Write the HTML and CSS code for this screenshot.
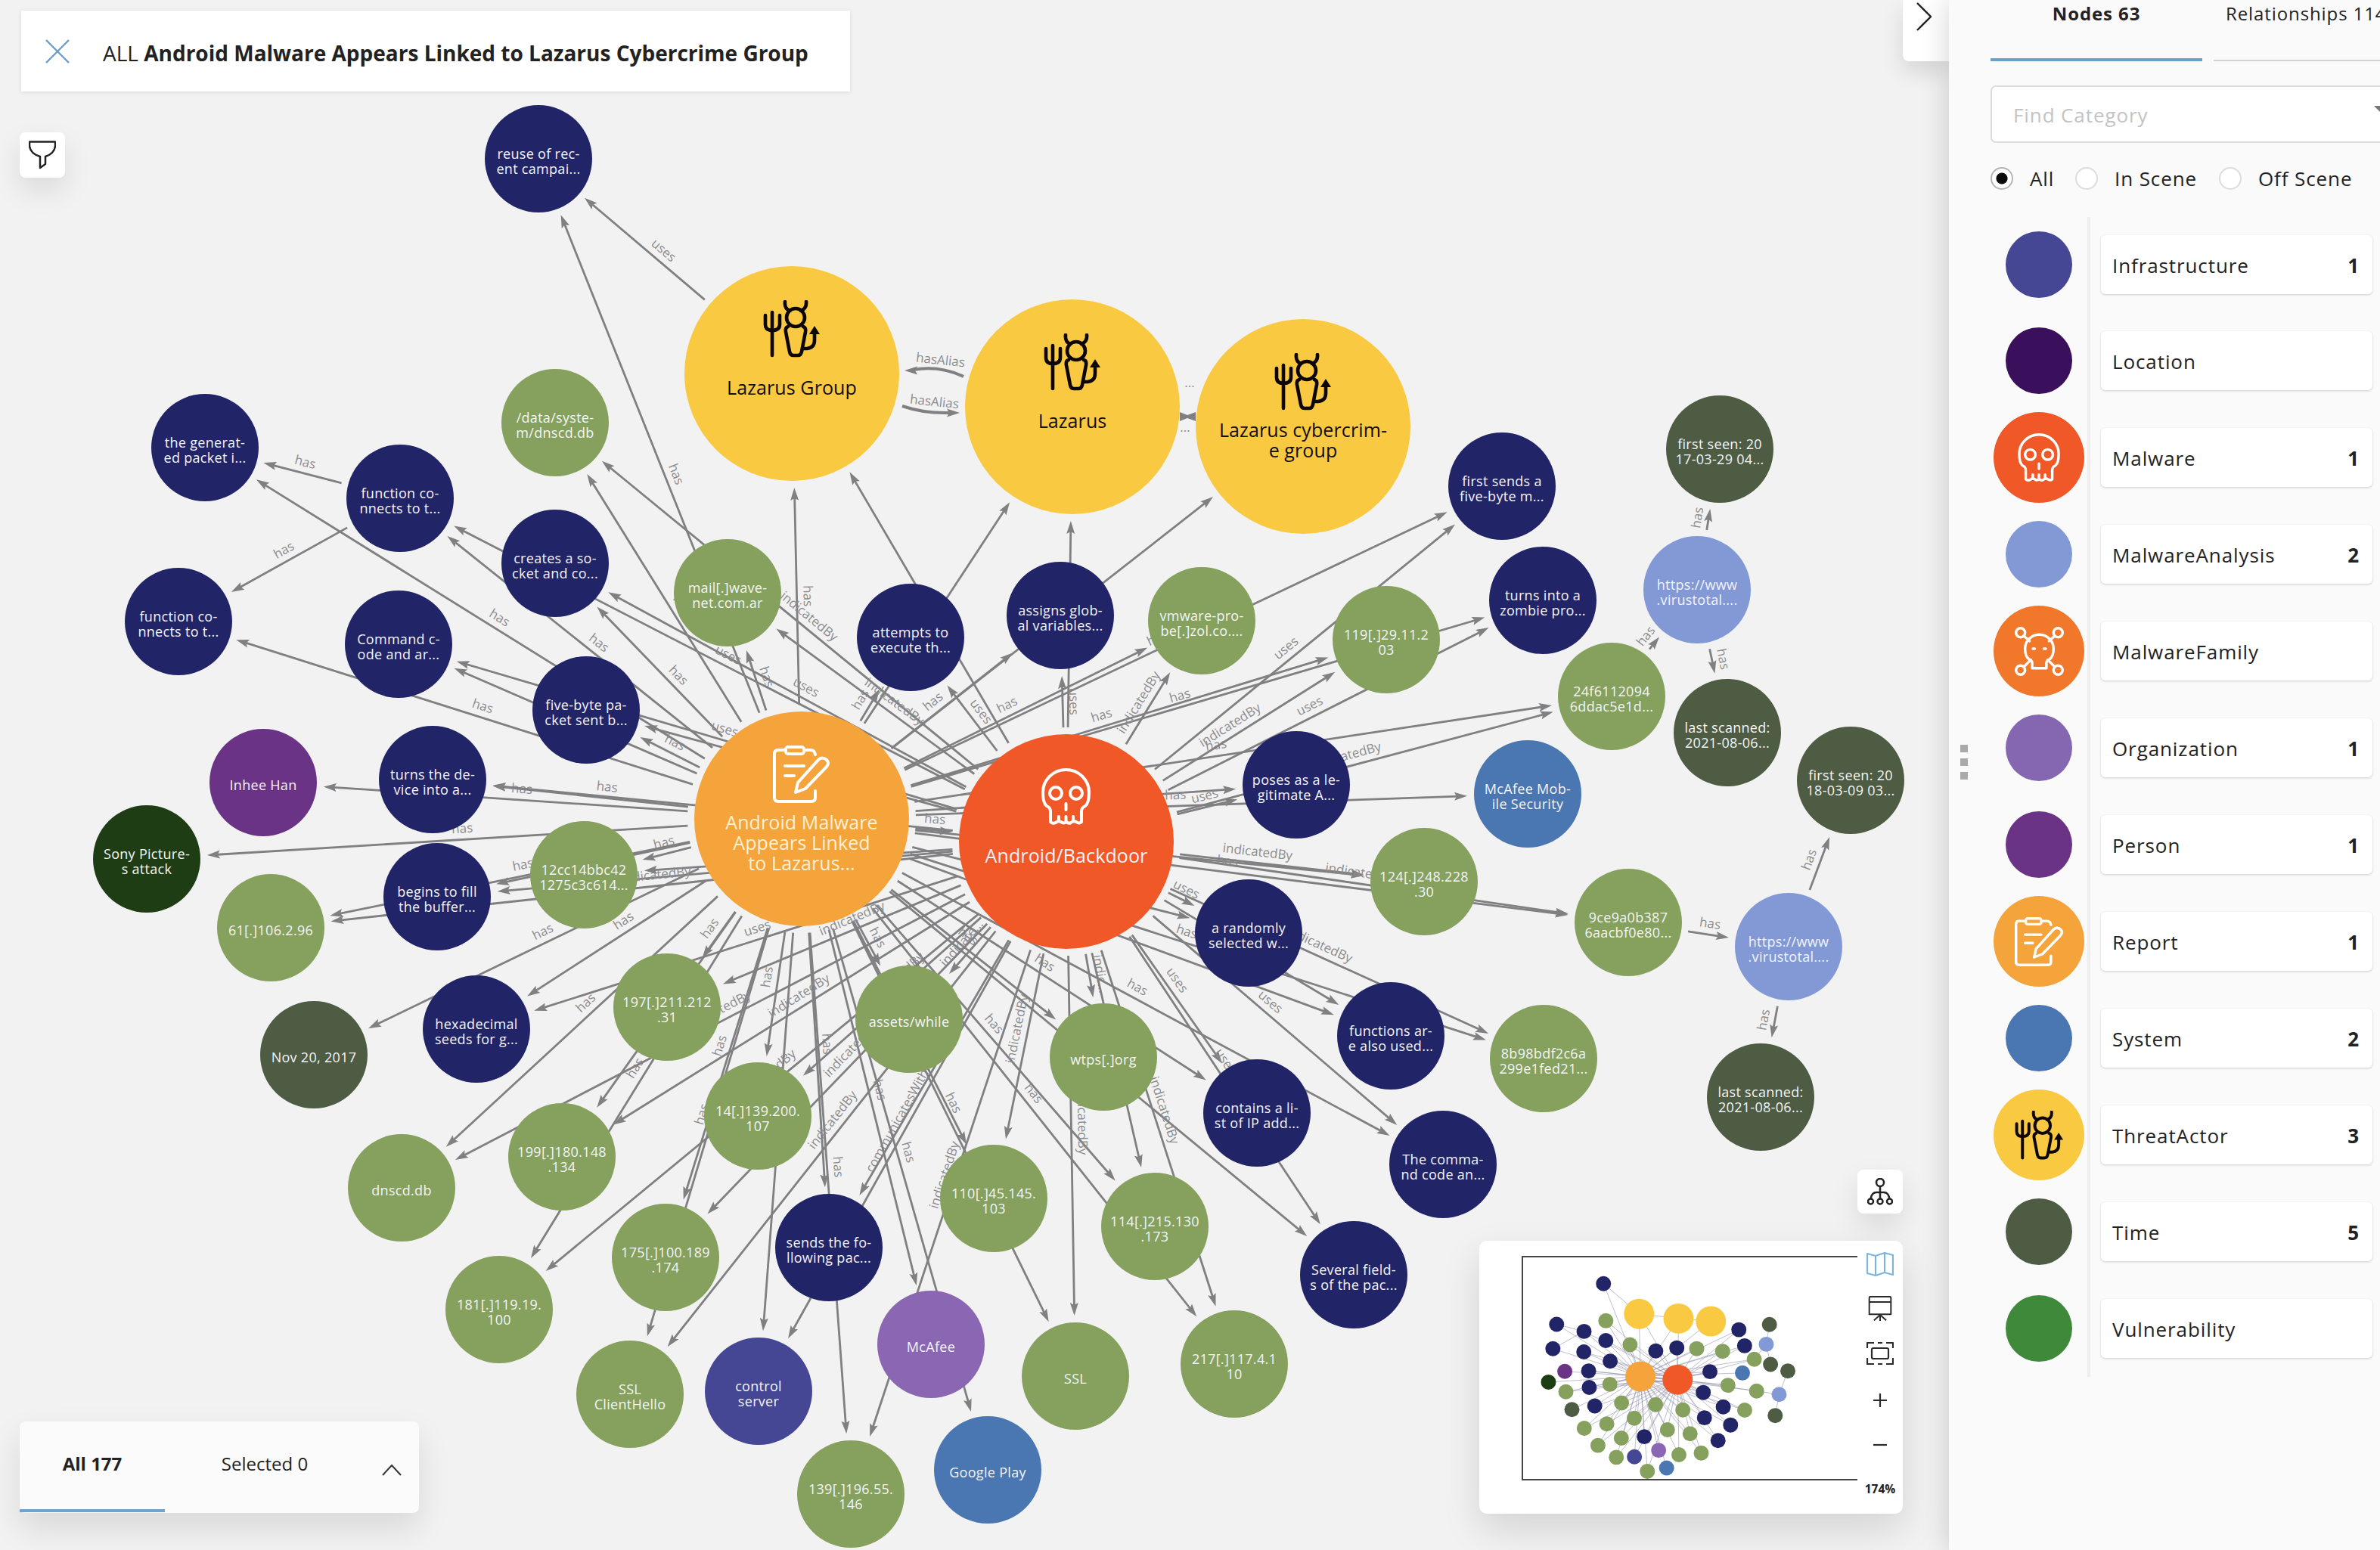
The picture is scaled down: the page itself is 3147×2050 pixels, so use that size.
FILE: index.html
```html
<!DOCTYPE html>
<html lang="en">
<head>
  <meta charset="UTF-8">
  <meta name="viewport" content="width=device-width, initial-scale=1.0">
  <title>Android Malware Appears Linked to Lazarus Cybercrime Group</title>
  <link rel="stylesheet" href="styles.css">
</head>
<body>
  <!-- Shared icons -->
  <svg class="defs" width="0" height="0">
    <symbol id="icon-devil" viewBox="0 0 76 76">
      <g fill="none" stroke="currentColor" stroke-width="4.6" stroke-linecap="round" stroke-linejoin="round">
        <path d="M12 16V73M3 20V32Q3 40 12 40Q22 40 22 32V20"/>
        <path d="M29 2Q28 11 35 14M57 2Q58 11 50 14"/>
        <circle cx="43" cy="23" r="12"/>
        <path d="M33 35Q29 36 30 42L35 68Q36 73 40 73H46Q50 73 51 68L56 42Q57 36 53 35"/>
        <path d="M53 64H58Q68 63 68 53V42"/>
      </g>
      <path d="M68 34L75 45H61Z" fill="currentColor"/>
    </symbol>
    <symbol id="icon-skull" viewBox="0 0 76 76">
      <g fill="none" stroke="currentColor" stroke-width="4" stroke-linecap="round" stroke-linejoin="round">
        <path d="M17 71V57Q17 52 12 50Q7 46 7 32A30.500 30 0 0 1 68 32Q68 46 63 50Q58 52 58 57V71Q55 74 51 71Q48 69 44 72Q41 74 38 71Q34 74 31 71Q27 69 24 72Q20 74 17 71Z"/>
        <circle cx="24" cy="33" r="8"/>
        <circle cx="51" cy="33" r="8"/>
        <path d="M37.500 47V55M28 64V70M37.500 64V70M47 64V70"/>
      </g>
    </symbol>
    <symbol id="icon-report" viewBox="0 0 76 76">
      <g fill="none" stroke="currentColor" stroke-width="4" stroke-linecap="round" stroke-linejoin="round">
        <path d="M17 6H7Q2 6 2 11V69Q2 74 7 74H51Q56 74 56 69V60M41 6H50Q55 6 56 12"/>
        <rect x="17" y="2" width="24" height="9" rx="3"/>
        <path d="M16 27H41M16 40H28"/>
        <path d="M30 62L33 49L60 19Q65 14 71 19Q75 23 71 28L43 57Z"/>
      </g>
    </symbol>
    <symbol id="icon-family" viewBox="0 0 76 76">
      <g fill="none" stroke="currentColor" stroke-width="4" stroke-linecap="round" stroke-linejoin="round">
        <circle cx="9" cy="9" r="7"/><circle cx="67" cy="9" r="7"/>
        <circle cx="9" cy="67" r="7"/><circle cx="67" cy="67" r="7"/>
        <path d="M14 14L23 22M62 14L53 22M14 62L25 51M62 62L51 51"/>
        <path d="M27 64V56Q27 52 22 50Q16 46 16 34A22 22 0 0 1 60 34Q60 46 54 50Q49 52 49 56V64Z"/>
        <path d="M28 34H31M45 34H48"/>
      </g>
    </symbol>
  </svg>

  <div class="app">
    <main class="canvas">
      <svg id="graph" class="graph" viewBox="0 0 2577 2050"></svg>

      <header class="title-card">
        <svg class="close-icon" viewBox="0 0 32 32"><path d="M1 1L31 31M31 1L1 31"/></svg>
        <div>ALL <b>Android Malware Appears Linked to Lazarus Cybercrime Group</b></div>
      </header>

      <button class="tool-btn filter-btn">
        <svg viewBox="0 0 36 38"><path d="M1 1.500H35V7Q34 17 22 21V31L15 36V21Q2 17 1 7Z"/></svg>
      </button>

      <button class="collapse-btn">
        <svg viewBox="0 0 20 38"><path d="M1 1L19 19L1 37"/></svg>
      </button>

      <div class="selection-bar">
        <div class="sel-tab active">All 177</div>
        <div class="sel-tab">Selected 0</div>
        <svg class="caret" viewBox="0 0 26 15"><path d="M1 14L13 1L25 14"/></svg>
      </div>

      <button class="tool-btn layout-btn">
        <svg viewBox="0 0 34 36">
          <circle cx="17" cy="6" r="5"/><circle cx="4.500" cy="31" r="3.500"/><circle cx="17" cy="31" r="3.500"/><circle cx="29.500" cy="31" r="3.500"/>
          <path d="M17 11V27.500M4.500 27.500Q6 19 12 19H22Q28 19 29.500 27.500"/>
        </svg>
      </button>

      <section class="map-panel">
        <div class="map-view"><svg id="minimap" viewBox="0 0 444 296"></svg></div>
        <div class="map-tools">
          <svg class="blue" viewBox="0 0 36 32"><path d="M1 2L12 5L24 1L35 4V30L24 27L12 31L1 28ZM12 5V31M24 1V27"/></svg>
          <svg viewBox="0 0 36 38"><path d="M2 3Q2 1 4 1H32Q34 1 34 3V27H2ZM2 9H34M18 27V37M18 28L9 36M18 28L27 36"/></svg>
          <svg viewBox="0 0 36 30"><path d="M1 8V1H10M15 1H21M26 1H35V8M35 21V29H26M21 29H15M10 29H1V21M7 10Q7 8 9 8H27Q29 8 29 10V20Q29 22 27 22H9Q7 22 7 20Z"/></svg>
          <svg class="small" viewBox="0 0 18 18"><path d="M0 9H18M9 0V18"/></svg>
          <svg class="small" viewBox="0 0 18 18"><path d="M0 9H18"/></svg>
          <b>174%</b>
        </div>
      </section>
    </main>

    <aside class="sidebar">
      <div class="drag"><i></i><i></i><i></i></div>
      <nav class="tabs">
        <div class="tab active">Nodes 63</div>
        <div class="tab">Relationships 114</div>
      </nav>
      <div class="search"><span>Find Category</span><i class="arrow"></i></div>
      <div class="radios">
        <label class="all"><i class="radio on"></i>All</label>
        <label class="in"><i class="radio"></i>In Scene</label>
        <label><i class="radio"></i>Off Scene</label>
      </div>
      <div class="categories" id="categories"></div>
    </aside>
  </div>

  <script>
    const colors = {
      navy: '#222468', green: '#85a15d', yellow: '#f9c942', orange: '#f4a43a', red: '#f05828',
      person: '#6a3386', event: '#1f3d14', time: '#4d5c42', analysis: '#8299d5', org: '#8b66b2',
      infra: '#454795', system: '#4a76b2'
    };

    // id, x, y, type, label lines
    const nodes = [
      ['reuse', 712, 210, 'navy', 'reuse of rec-|ent campai...'],
      ['lg', 1047, 494, 'yellow', 'Lazarus Group'],
      ['lz', 1418, 538, 'yellow', 'Lazarus'],
      ['lc', 1723, 564, 'yellow', 'Lazarus cybercrim-|e group'],
      ['gen', 271, 592, 'navy', 'the generat-|ed packet i...'],
      ['fc1', 529, 659, 'navy', 'function co-|nnects to t...'],
      ['data', 734, 559, 'green', '/data/syste-|m/dnscd.db'],
      ['creates', 734, 745, 'navy', 'creates a so-|cket and co...'],
      ['fc2', 236, 822, 'navy', 'function co-|nnects to t...'],
      ['cmd', 527, 852, 'navy', 'Command c-|ode and ar...'],
      ['five', 775, 939, 'navy', 'five-byte pa-|cket sent b...'],
      ['mail', 962, 784, 'green', 'mail[.]wave-|net.com.ar'],
      ['inhee', 348, 1035, 'person', 'Inhee Han'],
      ['turnsdev', 572, 1031, 'navy', 'turns the de-|vice into a...'],
      ['sony', 194, 1136, 'event', 'Sony Picture-|s attack'],
      ['begins', 578, 1186, 'navy', 'begins to fill|the buffer...'],
      ['12cc', 772, 1157, 'green', '12cc14bbc42|1275c3c614...'],
      ['61', 358, 1227, 'green', '61[.]106.2.96'],
      ['attempts', 1204, 843, 'navy', 'attempts to|execute th...'],
      ['assigns', 1402, 814, 'navy', 'assigns glob-|al variables...'],
      ['vmware', 1589, 821, 'green', 'vmware-pro-|be[.]zol.co....'],
      ['R', 1060, 1083, 'orange', 'Android Malware|Appears Linked|to Lazarus...'],
      ['M', 1410, 1113, 'red', 'Android/Backdoor'],
      ['poses', 1714, 1038, 'navy', 'poses as a le-|gitimate A...'],
      ['rand', 1651, 1234, 'navy', 'a randomly|selected w...'],
      ['firstsends', 1986, 643, 'navy', 'first sends a|five-byte m...'],
      ['turnsinto', 2040, 794, 'navy', 'turns into a|zombie pro...'],
      ['119', 1833, 846, 'green', '119[.]29.11.2|03'],
      ['first17', 2274, 594, 'time', 'first seen: 20|17-03-29 04...'],
      ['vt1', 2244, 780, 'analysis', 'https://www|.virustotal....'],
      ['24f', 2131, 921, 'green', '24f6112094|6ddac5e1d...'],
      ['last1', 2284, 969, 'time', 'last scanned:|2021-08-06...'],
      ['mobsec', 2020, 1050, 'system', 'McAfee Mob-|ile Security'],
      ['124', 1883, 1166, 'green', '124[.]248.228|.30'],
      ['9ce', 2153, 1220, 'green', '9ce9a0b387|6aacbf0e80...'],
      ['first18', 2447, 1032, 'time', 'first seen: 20|18-03-09 03...'],
      ['vt2', 2365, 1252, 'analysis', 'https://www|.virustotal....'],
      ['last2', 2328, 1451, 'time', 'last scanned:|2021-08-06...'],
      ['8b98', 2041, 1400, 'green', '8b98bdf2c6a|299e1fed21...'],
      ['functions', 1839, 1370, 'navy', 'functions ar-|e also used...'],
      ['contains', 1662, 1472, 'navy', 'contains a li-|st of IP add...'],
      ['comma', 1908, 1540, 'navy', 'The comma-|nd code an...'],
      ['several', 1790, 1686, 'navy', 'Several field-|s of the pac...'],
      ['wtps', 1459, 1398, 'green', 'wtps[.]org'],
      ['114', 1527, 1622, 'green', '114[.]215.130|.173'],
      ['217', 1632, 1804, 'green', '217[.]117.4.1|10'],
      ['ssl', 1422, 1820, 'green', 'SSL'],
      ['110', 1314, 1585, 'green', '110[.]45.145.|103'],
      ['mcafee', 1231, 1778, 'org', 'McAfee'],
      ['gplay', 1306, 1944, 'system', 'Google Play'],
      ['assets', 1202, 1348, 'green', 'assets/while'],
      ['hexa', 630, 1361, 'navy', 'hexadecimal|seeds for g...'],
      ['nov', 415, 1395, 'time', 'Nov 20, 2017'],
      ['197', 882, 1332, 'green', '197[.]211.212|.31'],
      ['dnscd', 531, 1571, 'green', 'dnscd.db'],
      ['199', 743, 1530, 'green', '199[.]180.148|.134'],
      ['14', 1002, 1476, 'green', '14[.]139.200.|107'],
      ['175', 880, 1663, 'green', '175[.]100.189|.174'],
      ['181', 660, 1732, 'green', '181[.]119.19.|100'],
      ['sends', 1096, 1650, 'navy', 'sends the fo-|llowing pac...'],
      ['sslch', 833, 1844, 'green', 'SSL|ClientHello'],
      ['control', 1003, 1840, 'infra', 'control|server'],
      ['139', 1125, 1976, 'green', '139[.]196.55.|146']
    ].map(([id, x, y, type, label]) => ({
      id, x, y, type, lines: label.split('|'),
      r: ['yellow', 'orange', 'red'].includes(type) ? 142 : 71
    }));
    const byId = {};
    nodes.forEach(n => byId[n.id] = n);

    const edges = [
      ['lg', 'reuse', 'uses'], ['fc1', 'gen', 'has'], ['fc1', 'fc2', 'has'],
      ['24f', 'vt1', 'has'], ['vt1', 'first17', 'has'], ['vt1', 'last1', 'has'],
      ['9ce', 'vt2', 'has'], ['vt2', 'first18', 'has'], ['vt2', 'last2', 'has'],
      ['M', 'lg', 'has'], ['M', 'lz', 'has'], ['M', 'control', 'communicatesWith']
    ];
    const standalone = ['first17', 'first18', 'last1', 'last2', 'vt1', 'vt2'];
    nodes.forEach(n => {
      if (n.id !== 'R' && !standalone.includes(n.id)) edges.push(['R', n.id, 'has']);
    });
    // the malware node uses techniques and is indicated by the green indicators
    nodes.forEach(n => {
      if (n.type === 'navy' && !['reuse', 'gen', 'fc2'].includes(n.id)) edges.push(['M', n.id, 'uses']);
      if (n.type === 'green') edges.push(['M', n.id, 'indicatedBy']);
    });

    function arrowHead(x, y, a) {
      const deg = a * 180 / Math.PI;
      return `<path class="head" transform="translate(${x.toFixed(1)} ${y.toFixed(1)}) rotate(${deg.toFixed(1)})" d="M0 0L-17 -5.500L-14 0L-17 5.500Z"/>`;
    }

    function edgeSvg([from, to, label]) {
      const s = byId[from], t = byId[to];
      const a = Math.atan2(t.y - s.y, t.x - s.x);
      const x1 = s.x + Math.cos(a) * (s.r + 9), y1 = s.y + Math.sin(a) * (s.r + 9);
      const x2 = t.x - Math.cos(a) * (t.r + 9), y2 = t.y - Math.sin(a) * (t.r + 9);
      let deg = a * 180 / Math.PI;
      if (deg > 90) deg -= 180;
      if (deg < -90) deg += 180;
      const len = Math.hypot(x2 - x1, y2 - y1);
      const room = Math.max(3, Math.floor(len / 8.5));
      if (label.length > room) label = label.slice(0, room - 1) + '...';
      // labels sit a bit nearer to the larger node
      const shift = len > 120 ? (s.r - t.r) * 0.29 : 0;
      const mx = (x1 + x2) / 2 - Math.cos(a) * shift, my = (y1 + y2) / 2 - Math.sin(a) * shift;
      return `<line x1="${x1.toFixed(1)}" y1="${y1.toFixed(1)}" x2="${(x2 - Math.cos(a) * 10).toFixed(1)}" y2="${(y2 - Math.sin(a) * 10).toFixed(1)}"/>`
        + arrowHead(x2, y2, a)
        + `<text transform="translate(${mx.toFixed(1)} ${my.toFixed(1)}) rotate(${deg.toFixed(1)})" y="-9">${label}</text>`;
    }

    function nodeSvg(n) {
      const big = n.r > 100;
      const step = big ? 27 : 20;
      let first = n.lines.length > 1 ? 0 : 10;
      if (big) first = n.lines.length > 1 ? 14 : 28;
      const icon = { yellow: 'devil', orange: 'report', red: 'skull' }[n.type];
      let out = `<circle cx="${n.x}" cy="${n.y}" r="${n.r}" fill="${colors[n.type]}"/>`;
      if (icon) out += `<use href="#icon-${icon}" x="${n.x - 38}" y="${n.y - 97}" width="76" height="76"/>`;
      n.lines.forEach((l, i) => out += `<text x="${n.x}" y="${n.y + first + i * step}">${l}</text>`);
      return `<g class="node ${big ? 'big' : ''} ${n.type}">${out}</g>`;
    }

    const aliases = `
      <path class="curve" d="M1274 498Q1242 483 1208 489"/>${arrowHead(1196, 490, Math.PI)}
      <path class="curve" d="M1193 537Q1222 547 1256 546"/>${arrowHead(1269, 546, 0)}
      <text transform="translate(1243 482) rotate(6)">hasAlias</text>
      <text transform="translate(1235 537) rotate(6)">hasAlias</text>
      <path class="head" d="M1560 545L1570 549L1581 545V557L1570 553L1560 557Z"/>
      <text x="1573" y="512">...</text><text x="1567" y="571">...</text>`;

    document.getElementById('graph').innerHTML =
      `<g class="edges">${edges.map(edgeSvg).join('')}${aliases}</g>` + nodes.map(nodeSvg).join('');

    // Minimap is the same graph, scaled down and without text
    const k = 0.1405;
    document.getElementById('minimap').innerHTML = `<g transform="translate(7.200 6.300) scale(${k})">`
      + edges.concat([['lg', 'lz'], ['lz', 'lc']]).map(([f, t]) => `<line x1="${byId[f].x}" y1="${byId[f].y}" x2="${byId[t].x}" y2="${byId[t].y}"/>`).join('')
      + nodes.map(n => `<circle cx="${n.x}" cy="${n.y}" r="${n.r}" fill="${colors[n.type]}"/>`).join('')
      + '</g>';

    const categories = [
      ['Infrastructure', 1, '#454795'], ['Location', '', '#3a0f5b'], ['Malware', 1, '#f05828', 'skull'],
      ['MalwareAnalysis', 2, '#8299d5'], ['MalwareFamily', '', '#f1772b', 'family'], ['Organization', 1, '#8566b0'],
      ['Person', 1, '#6a3386'], ['Report', 1, '#f4a43a', 'report'], ['System', 2, '#4a76b2'],
      ['ThreatActor', 3, '#f9c942', 'devil'], ['Time', 5, '#4d5c42'], ['Vulnerability', '', '#3f8a3a']
    ];
    document.getElementById('categories').innerHTML = categories.map(([name, count, color, icon]) => `
      <div class="category">
        <div class="dot-cell">
          <div class="dot ${icon ? 'large ' + icon : ''}" style="background:${color}">${icon ? `<svg><use href="#icon-${icon}"/></svg>` : ''}</div>
        </div>
        <div class="card"><span>${name}</span><b>${count}</b></div>
      </div>`).join('');
  </script>
</body>
</html>
```

FILE: styles.css
```css
* {
  box-sizing: border-box;
}
body {
  margin: 0;
  font-family: "Open Sans", "Noto Sans", sans-serif;
  font-size: 26px;
  color: #222;
  background: #f2f2f3;
  overflow: hidden;
}
button {
  border: none;
  padding: 0;
}
.defs {
  position: absolute;
}
.app {
  display: flex;
  width: 3147px;
  height: 2050px;
  overflow: hidden;
}
.canvas {
  position: relative;
  width: 2577px;
  flex: none;
}

/* Graph */
.graph {
  display: block;
  width: 2577px;
  height: 2050px;
}
.edges line,
.edges .curve {
  stroke: #808082;
  stroke-width: 2.8;
  fill: none;
}
.edges .curve {
  stroke-width: 4;
}
.edges .head {
  fill: #808082;
}
.edges text {
  font-size: 17px;
  fill: #8c8c8e;
  text-anchor: middle;
}
.node text {
  font-size: 18px;
  letter-spacing: 0.3px;
  fill: #f4f4f8;
  text-anchor: middle;
}
.node.big text {
  font-size: 25px;
  letter-spacing: 0.1px;
}
.node {
  color: #fff;
}
.node.yellow {
  color: #0c0606;
}
.node.yellow text {
  fill: #140c0c;
}
.node.orange text {
  fill: #fff0d6;
}

/* Floating cards */
.title-card {
  position: absolute;
  left: 28px;
  top: 14px;
  width: 1096px;
  height: 107px;
  display: flex;
  align-items: center;
  padding: 4px 0 0 32px;
  gap: 44px;
  background: #fff;
  box-shadow: 0 1px 6px rgba(0, 0, 0, 0.1);
  white-space: nowrap;
  font-size: 28px;
}
.close-icon {
  width: 32px;
  height: 32px;
  fill: none;
  stroke: #6c9cc9;
  stroke-width: 2.4;
  margin-top: -3px;
}
.tool-btn {
  position: absolute;
  width: 60px;
  display: flex;
  align-items: center;
  justify-content: center;
  background: #fff;
  border-radius: 8px;
  box-shadow: 0 16px 36px rgba(0, 0, 0, 0.1);
}
.tool-btn svg {
  fill: none;
  stroke: #222;
  stroke-width: 2.5;
  stroke-linejoin: round;
}
.filter-btn {
  left: 26px;
  top: 175px;
  height: 60px;
}
.filter-btn svg {
  width: 36px;
  height: 38px;
}
.layout-btn {
  left: 2456px;
  top: 1547px;
  height: 58px;
}
.layout-btn svg {
  width: 34px;
  height: 36px;
}
.collapse-btn {
  position: absolute;
  right: 0;
  top: 0;
  width: 61px;
  height: 81px;
  background: #fff;
  border-radius: 0 0 0 8px;
  box-shadow: 0 14px 30px rgba(0, 0, 0, 0.12);
}
.collapse-btn svg {
  display: block;
  width: 20px;
  height: 38px;
  margin: -38px 0 0 18px;
  fill: none;
  stroke: #222;
  stroke-width: 2.4;
}
.selection-bar {
  position: absolute;
  left: 26px;
  top: 1880px;
  width: 528px;
  height: 121px;
  display: flex;
  background: #fbfbfc;
  border-radius: 8px;
  box-shadow: 0 20px 44px rgba(0, 0, 0, 0.11);
  font-size: 24px;
}
.sel-tab {
  width: 192px;
  height: 120px;
  padding-top: 39px;
  text-align: center;
}
.sel-tab + .sel-tab {
  width: 264px;
}
.sel-tab.active {
  font-weight: bold;
  border-bottom: 4px solid #6fa3d0;
}
.caret {
  width: 26px;
  height: 15px;
  margin: 57px 0 0 23px;
  fill: none;
  stroke: #333;
  stroke-width: 2;
}

/* Minimap */
.map-panel {
  position: absolute;
  left: 1956px;
  top: 1641px;
  width: 560px;
  height: 361px;
  display: flex;
  background: #fff;
  border-radius: 10px;
  box-shadow: 0 20px 50px rgba(0, 0, 0, 0.13);
}
.map-view {
  width: 444px;
  height: 297px;
  margin: 20px 0 0 56px;
  border: 2px solid #444;
  border-right: none;
}
.map-view svg {
  display: block;
  width: 444px;
  height: 296px;
  margin: -1px 0 0 -1px;
}
.map-view line {
  stroke: #8c8ca8;
  stroke-width: 4;
}
.map-tools {
  width: 60px;
  display: flex;
  flex-direction: column;
  align-items: center;
  padding-top: 14px;
}
.map-tools svg {
  width: 36px;
  height: 34px;
  margin-bottom: 25px;
  fill: none;
  stroke: #2b2b2b;
  stroke-width: 2.2;
  stroke-linejoin: round;
}
.map-tools svg.blue {
  stroke: #7db4de;
}
.map-tools svg.small {
  width: 18px;
  height: 18px;
  margin: 9px 0 30px;
}
.map-tools svg + .small {
  margin-top: 11px;
}
.map-tools b {
  margin-top: 9px;
  font-size: 15.500px;
  line-height: 20px;
}

/* Sidebar */
.sidebar {
  position: relative;
  width: 570px;
  flex: none;
  padding-left: 55px;
  background: #fafafb;
  box-shadow: -2px 0 34px rgba(0, 0, 0, 0.16);
  letter-spacing: 0.9px;
  white-space: nowrap;
}
.drag {
  position: absolute;
  left: 15px;
  top: 985px;
  display: flex;
  flex-direction: column;
  gap: 8px;
}
.drag i {
  width: 10px;
  height: 10px;
  background: #aaa;
}
.tabs {
  display: flex;
  gap: 15px;
  height: 81px;
  font-size: 24px;
}
.tab {
  width: 280px;
  flex: none;
  padding-left: 16px;
  line-height: 36px;
  border-bottom: 2px solid #d2d2d4;
}
.tab.active {
  padding: 0;
  text-align: center;
  font-weight: bold;
  border-bottom: 4px solid #6b9fce;
}
.search {
  display: flex;
  align-items: center;
  width: 560px;
  height: 76px;
  margin-top: 32px;
  padding-left: 28px;
  background: #fff;
  border: 2px solid #dcdcdd;
  border-radius: 7px;
  color: #c3c3c3;
}
.search span {
  width: 477px;
  padding-top: 2px;
}
.search .arrow {
  margin-top: -11px;
  border: 11px solid transparent;
  border-top-color: #777;
  border-bottom: none;
}
.radios {
  display: flex;
  height: 98px;
  padding-top: 31px;
}
.radios label {
  display: flex;
  width: 200px;
  height: 32px;
  align-items: center;
  gap: 22px;
}
.radios .all {
  width: 112px;
}
.radios .in {
  width: 190px;
}
.radio {
  width: 30px;
  height: 30px;
  border: 2px solid #dcdcdc;
  border-radius: 50%;
  background: #fff;
}
.radio.on {
  border-color: #b4b4b4;
  background: radial-gradient(circle, #0a0a0a 7px, #fff 8px);
}
.categories {
  height: 1518px;
}
.category {
  display: flex;
  align-items: center;
  height: 128px;
}
.category:first-child {
  height: 126px;
}
.category:first-child .dot-cell,
.category:last-child .dot-cell {
  height: 100%;
}
.dot-cell {
  display: flex;
  align-items: center;
  justify-content: center;
  width: 132px;
  height: 128px;
  border-right: 4px solid #eeeeef;
}
.dot {
  display: flex;
  align-items: center;
  justify-content: center;
  width: 88px;
  height: 88px;
  flex: none;
  border-radius: 50%;
  color: #fff;
}
.dot.large {
  width: 120px;
  height: 120px;
}
.dot svg {
  width: 65px;
  height: 65px;
}
.dot.devil {
  color: #0c0606;
}
.card {
  display: flex;
  align-items: center;
  justify-content: space-between;
  width: 359px;
  height: 78px;
  margin-left: 14px;
  padding: 1px 17px 0 15px;
  background: #fff;
  border-radius: 6px;
  box-shadow: 0 1px 3px rgba(0, 0, 0, 0.18);
}
```
